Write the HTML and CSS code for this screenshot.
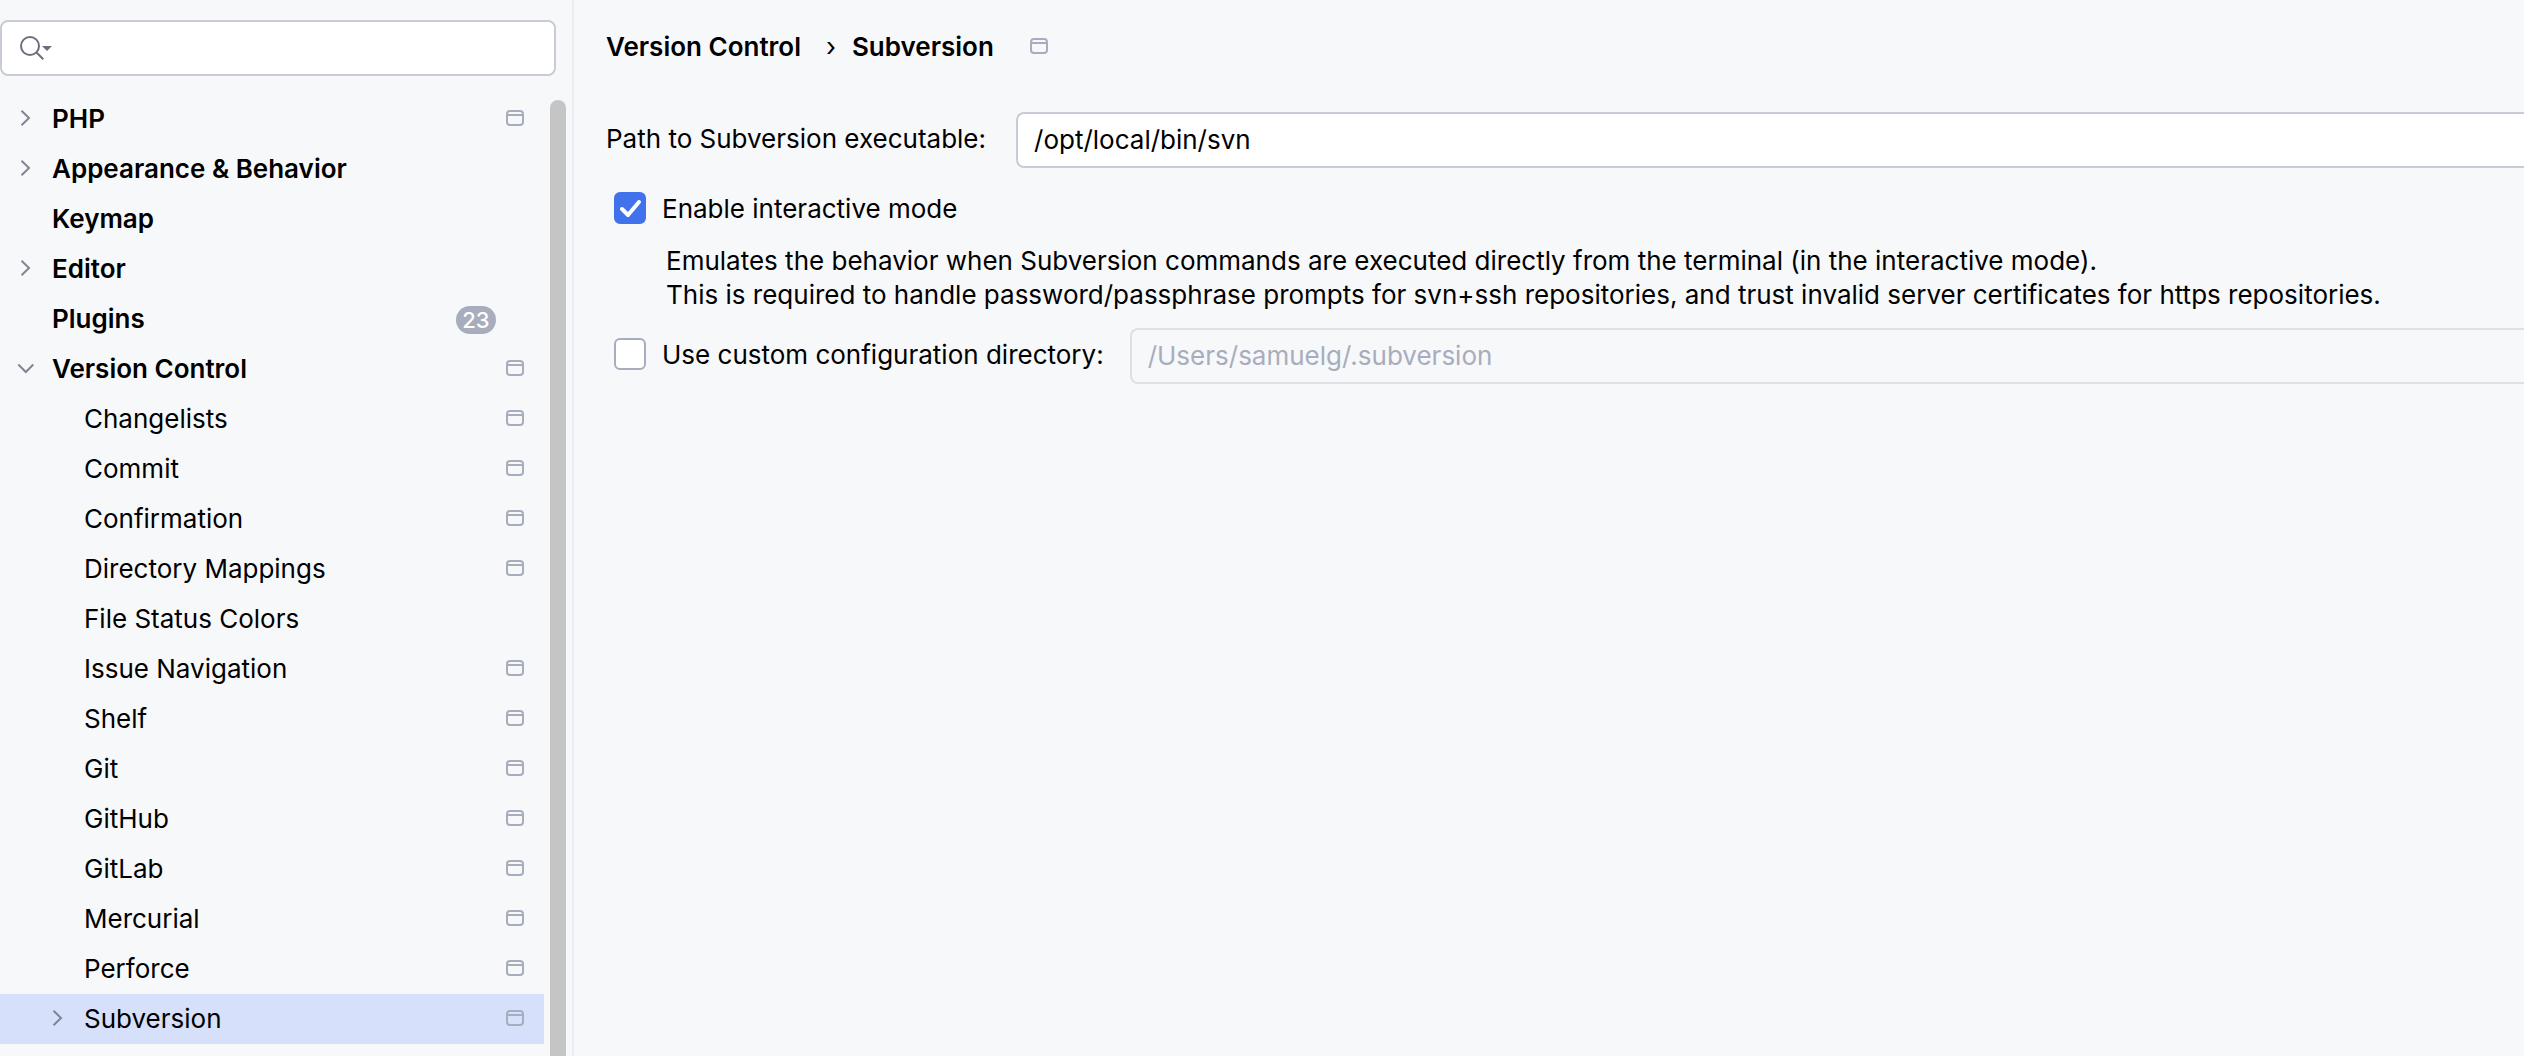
FILE: index.html
```html
<!DOCTYPE html>
<html lang="en">
<head>
<meta charset="utf-8">
<title>Settings – Subversion</title>
<link rel="stylesheet" href="styles.css">
</head>
<body>
<svg class="sprite" aria-hidden="true">
  <symbol id="project" viewBox="0 0 18 18"><rect x="1" y="1" width="16" height="14" rx="3" fill="none" stroke="currentColor" stroke-width="2"/><path d="M1 5H17" stroke="currentColor" stroke-width="2"/></symbol>
  <symbol id="closed" viewBox="0 0 18 18"><path d="M5.500 .8L13 8L5.500 15.200" fill="none" stroke="currentColor" stroke-width="2"/></symbol>
  <symbol id="open" viewBox="0 0 18 18"><path d="M2.300 4.500L9.800 12L17.300 4.500" fill="none" stroke="currentColor" stroke-width="2"/></symbol>
</svg>
<div class="window">
  <aside class="sidebar">
    <div class="search">
      <svg class="search-icon" viewBox="0 0 34 26" aria-hidden="true"><circle cx="10" cy="11" r="9" fill="none" stroke="currentColor" stroke-width="2"/><path d="M16.500 17.500L23.300 24.300" stroke="currentColor" stroke-width="2"/><path d="M22 11H32L27 16Z" fill="currentColor"/></svg>
      <input class="search-input" type="text" aria-label="Search settings">
    </div>
    <div class="tree-area">
      <nav class="tree" aria-label="Settings">
        <a class="row top" href="#"><svg class="chevron"><use href="#closed"/></svg><span class="name">PHP</span><svg class="project"><use href="#project"/></svg></a>
        <a class="row top" href="#"><svg class="chevron"><use href="#closed"/></svg><span class="name">Appearance &amp; Behavior</span></a>
        <a class="row top" href="#"><span class="chevron"></span><span class="name">Keymap</span></a>
        <a class="row top" href="#"><svg class="chevron"><use href="#closed"/></svg><span class="name">Editor</span></a>
        <a class="row top" href="#"><span class="chevron"></span><span class="name">Plugins</span><span class="count">23</span></a>
        <a class="row top" href="#"><svg class="chevron"><use href="#open"/></svg><span class="name">Version Control</span><svg class="project"><use href="#project"/></svg></a>
        <a class="row child" href="#"><span class="chevron"></span><span class="name">Changelists</span><svg class="project"><use href="#project"/></svg></a>
        <a class="row child" href="#"><span class="chevron"></span><span class="name">Commit</span><svg class="project"><use href="#project"/></svg></a>
        <a class="row child" href="#"><span class="chevron"></span><span class="name">Confirmation</span><svg class="project"><use href="#project"/></svg></a>
        <a class="row child" href="#"><span class="chevron"></span><span class="name">Directory Mappings</span><svg class="project"><use href="#project"/></svg></a>
        <a class="row child" href="#"><span class="chevron"></span><span class="name">File Status Colors</span></a>
        <a class="row child" href="#"><span class="chevron"></span><span class="name">Issue Navigation</span><svg class="project"><use href="#project"/></svg></a>
        <a class="row child" href="#"><span class="chevron"></span><span class="name">Shelf</span><svg class="project"><use href="#project"/></svg></a>
        <a class="row child" href="#"><span class="chevron"></span><span class="name">Git</span><svg class="project"><use href="#project"/></svg></a>
        <a class="row child" href="#"><span class="chevron"></span><span class="name">GitHub</span><svg class="project"><use href="#project"/></svg></a>
        <a class="row child" href="#"><span class="chevron"></span><span class="name">GitLab</span><svg class="project"><use href="#project"/></svg></a>
        <a class="row child" href="#"><span class="chevron"></span><span class="name">Mercurial</span><svg class="project"><use href="#project"/></svg></a>
        <a class="row child" href="#"><span class="chevron"></span><span class="name">Perforce</span><svg class="project"><use href="#project"/></svg></a>
        <a class="row child selected" href="#" aria-current="page"><svg class="chevron"><use href="#closed"/></svg><span class="name">Subversion</span><svg class="project"><use href="#project"/></svg></a>
      </nav>
      <div class="scrollbar"></div>
    </div>
  </aside>
  <main class="content">
    <header class="crumbs">
      <a class="crumb" href="#">Version Control</a>
      <span class="separator">›</span>
      <span class="crumb">Subversion</span>
      <svg class="project"><use href="#project"/></svg>
    </header>
    <div class="field-row">
      <label class="field-label" for="svn-path">Path to Subversion executable:</label>
      <input class="field" id="svn-path" type="text" value="/opt/local/bin/svn">
    </div>
    <div class="option">
      <input class="check" id="interactive" type="checkbox" checked>
      <label class="check-label" for="interactive">Enable interactive mode</label>
    </div>
    <p class="hint">Emulates the behavior when Subversion commands are executed directly from the terminal (in the interactive mode).<br>This is required to handle password/passphrase prompts for svn+ssh repositories, and trust invalid server certificates for https repositories.</p>
    <div class="directory-row">
      <div class="option">
        <input class="check" id="custom" type="checkbox">
        <label class="check-label" for="custom">Use custom configuration directory:</label>
      </div>
      <input class="field" type="text" value="/Users/samuelg/.subversion" aria-label="Configuration directory" disabled>
    </div>
  </main>
</div>
</body>
</html>
```
FILE: styles.css
```css
* { box-sizing: border-box; }

body {
  margin: 0;
  background: #f7f8fa;
  color: #000;
  font: 26px/34px Inter, "Liberation Sans", sans-serif;
}

a { color: inherit; text-decoration: none; }

.sprite { position: absolute; width: 0; height: 0; }

.window { display: flex; height: 100vh; overflow: hidden; }

.sidebar {
  display: flex;
  flex-direction: column;
  flex: none;
  width: 574px;
  padding-top: 20px;
  border-right: 2px solid #ebecf0;
}

.search {
  display: flex;
  align-items: center;
  flex: none;
  height: 56px;
  margin-right: 16px;
  padding: 0 18px;
  border: 2px solid #c9ccd6;
  border-radius: 8px;
  background: #fff;
}

.search-icon { flex: none; width: 34px; height: 26px; color: #6c707e; }

.search-input {
  flex: 1;
  min-width: 0;
  border: 0;
  outline: 0;
  background: none;
  font: inherit;
}

.tree-area { display: flex; flex: 1; min-height: 0; gap: 6px; margin-top: 18px; }

.tree { flex: 1; overflow: hidden; }

.row {
  display: flex;
  align-items: center;
  height: 50px;
  gap: 18px;
  padding: 0 20px 0 16px;
}

.row.top { font-weight: 600; }
.row.child { padding-left: 48px; }
.row.selected { background: #d6e0fb; }

.name { flex: 1; }

.chevron { flex: none; width: 18px; height: 18px; color: #818594; }

.project { flex: none; width: 18px; height: 18px; color: #a8adbd; }

.count {
  min-width: 40px;
  margin: 2px 28px 0 0;
  padding: 0 6px;
  border-radius: 14px;
  background: #a8adbd;
  color: #fff;
  font-size: 22px;
  font-weight: 500;
  line-height: 28px;
  text-align: center;
}

.scrollbar {
  width: 16px;
  margin: 6px 6px 0 0;
  border-radius: 8px 8px 0 0;
  background: #c5c5c6;
}

.content { flex: 1; min-width: 0; padding: 30px 0 0 32px; }

.crumbs { display: flex; align-items: center; font-weight: 600; }
.separator { margin: 0 16px 0 25px; font-weight: 400; }
.crumbs .project { margin-left: 36px; }

.field-row { display: flex; align-items: center; gap: 30px; margin: 48px 0 22px; }

.field-label { padding-bottom: 2px; }

.field {
  flex: 1;
  min-width: 0;
  height: 56px;
  padding: 0 16px 2px;
  border: 2px solid #c9ccd6;
  border-right: 0;
  border-radius: 8px 0 0 8px;
  outline: 0;
  background: #fff;
  color: #000;
  font: inherit;
}

.field:disabled { border-color: #dfe0e4; background: transparent; color: #a8adbd; }

.option { display: flex; align-items: center; gap: 16px; margin-left: 8px; }
.check-label { padding-top: 2px; }

.directory-row { display: flex; align-items: center; gap: 26px; }
.directory-row .option { padding-bottom: 4px; }

.check {
  appearance: none;
  flex: none;
  width: 32px;
  height: 32px;
  margin: 0;
  border: 2px solid #a8adbd;
  border-radius: 6px;
  background: #fff;
}

.check:checked {
  border-color: #4272eb;
  background: #4272eb url("data:image/svg+xml,%3Csvg xmlns='http://www.w3.org/2000/svg' viewBox='0 0 32 32'%3E%3Cpath d='M8 17L14 23L25 10' fill='none' stroke='white' stroke-width='4' stroke-linecap='round' stroke-linejoin='round'/%3E%3C/svg%3E") border-box;
}

.hint { margin: 18px 0 16px 60px; }
```
